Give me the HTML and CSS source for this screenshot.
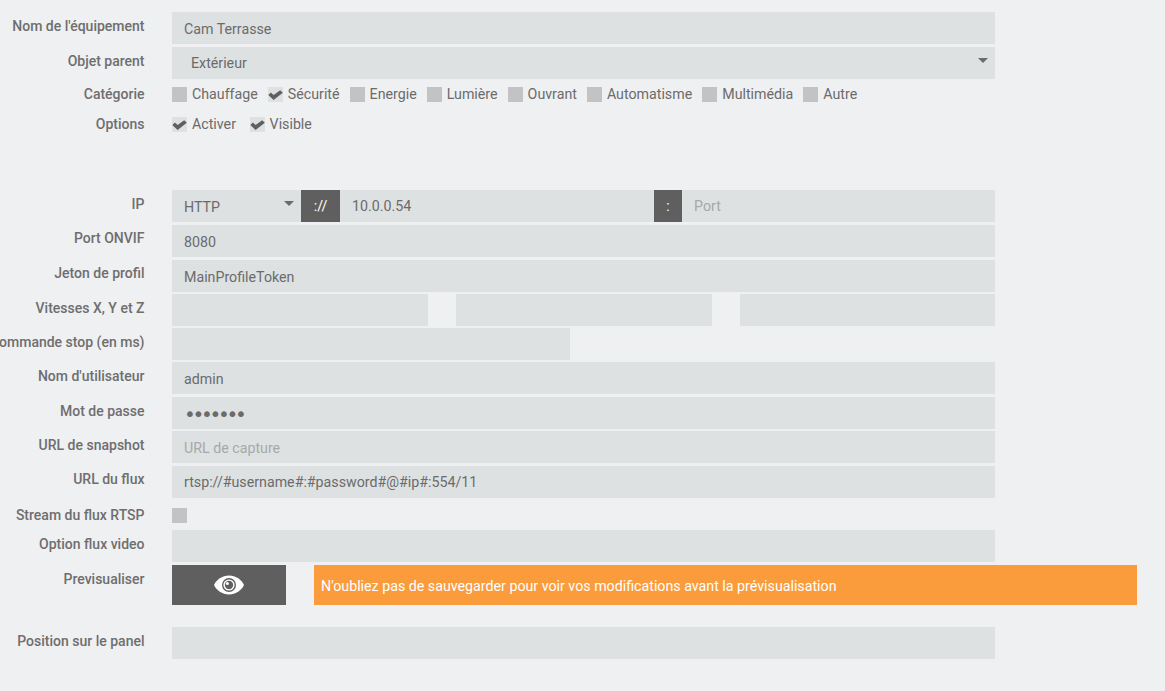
FILE: index.html
```html
<!DOCTYPE html>
<html lang="fr">
<head>
<meta charset="utf-8">
<title>Cam Terrasse</title>
<link rel="stylesheet" href="styles.css">
</head>
<body>
<form class="form">
  <div class="row gap3"><label class="label">Nom de l'équipement</label><div class="fields"><input class="input" value="Cam Terrasse"></div></div>
  <div class="row gap8"><label class="label">Objet parent</label><div class="fields"><div class="select-wrap"><select class="input select"><option>Extérieur</option></select><span class="caret"></span></div></div></div>
  <div class="row row-check gap15"><label class="label">Catégorie</label><div class="fields checks cat">
    <span class="check"><i class="box"></i>Chauffage</span>
    <span class="check"><i class="box on"><svg viewBox="0 0 15 15"><path d="M.3 8 2.900 5.400 5.600 8 12.200 3.200 14.800 5.700 5.600 13z"/></svg></i>Sécurité</span>
    <span class="check"><i class="box"></i>Energie</span>
    <span class="check"><i class="box"></i>Lumière</span>
    <span class="check"><i class="box"></i>Ouvrant</span>
    <span class="check"><i class="box"></i>Automatisme</span>
    <span class="check"><i class="box"></i>Multimédia</span>
    <span class="check"><i class="box"></i>Autre</span>
  </div></div>
  <div class="row row-check gap58"><label class="label">Options</label><div class="fields checks">
    <span class="check"><i class="box on"><svg viewBox="0 0 15 15"><path d="M.3 8 2.900 5.400 5.600 8 12.200 3.200 14.800 5.700 5.600 13z"/></svg></i>Activer</span>
    <span class="check"><i class="box on"><svg viewBox="0 0 15 15"><path d="M.3 8 2.900 5.400 5.600 8 12.200 3.200 14.800 5.700 5.600 13z"/></svg></i>Visible</span>
  </div></div>

  <div class="row gap3"><label class="label">IP</label><div class="fields group">
    <div class="select-wrap proto"><select class="input select-plain"><option>HTTP</option></select><span class="caret"></span></div>
    <span class="addon slashes">://</span>
    <input class="input ip input-high" value="10.0.0.54">
    <span class="addon colon">:</span>
    <input class="input port input-high" placeholder="Port">
  </div></div>
  <div class="row gap3"><label class="label label-up">Port ONVIF</label><div class="fields"><input class="input" value="8080"></div></div>
  <div class="row gap2"><label class="label label-up">Jeton de profil</label><div class="fields"><input class="input" value="MainProfileToken"></div></div>
  <div class="row gap2"><label class="label">Vitesses X, Y et Z</label><div class="fields speeds"><input class="input"><input class="input"><input class="input"></div></div>
  <div class="row gap2"><label class="label">Commande stop (en ms)</label><div class="fields"><input class="input half"></div></div>
  <div class="row gap3"><label class="label">Nom d'utilisateur</label><div class="fields"><input class="input" value="admin"></div></div>
  <div class="row gap2"><label class="label">Mot de passe</label><div class="fields"><input class="input secret" type="password" value="abcdefg"></div></div>
  <div class="row gap3"><label class="label">URL de snapshot</label><div class="fields"><input class="input" placeholder="URL de capture"></div></div>
  <div class="row gap10"><label class="label label-up">URL du flux</label><div class="fields"><input class="input input-high" value="rtsp://#username#:#password#@#ip#:554/11"></div></div>
  <div class="row row-stream gap7"><label class="label">Stream du flux RTSP</label><div class="fields"><i class="box"></i></div></div>
  <div class="row gap3"><label class="label">Option flux video</label><div class="fields"><input class="input"></div></div>
  <div class="row row-preview gap22"><label class="label">Previsualiser</label><div class="fields preview">
    <button type="button" class="eye-btn"><svg class="eye" viewBox="0 0 30 20">
      <path class="eye-white" d="M15 .5C22 .5 27.500 4.800 30 10 27.500 15.200 22 19.500 15 19.500S2.500 15.200 0 10C2.500 4.800 8 .5 15 .5z"/>
      <circle class="eye-dark" cx="15" cy="10" r="7"/>
      <circle class="eye-white" cx="15" cy="10" r="5.600"/>
      <circle class="eye-dark" cx="15" cy="10" r="4.200"/>
      <circle class="eye-white" cx="13.400" cy="8.400" r="1.500"/>
    </svg></button>
    <div class="notice">N'oubliez pas de sauvegarder pour voir vos modifications avant la prévisualisation</div>
  </div></div>
  <div class="row"><label class="label">Position sur le panel</label><div class="fields"><input class="input"></div></div>
</form>
</body>
</html>
```
FILE: styles.css
```css
* { box-sizing: border-box; }
html, body { margin: 0; padding: 0; height: 100%; overflow: hidden; }
body { background: #eff0f2; font-family: Roboto, "Liberation Sans", sans-serif; font-size: 14.220px; color: #6b6b6b; }
.form { padding-top: 12px; width: 1165px; }
.row { display: flex; height: 32px; }
.gap2 { margin-bottom: 2px; }
.gap3 { margin-bottom: 3px; }
.gap7 { margin-bottom: 7px; }
.gap8 { margin-bottom: 8px; }
.gap10 { margin-bottom: 10px; }
.gap15 { margin-bottom: 15px; }
.gap22 { margin-bottom: 22px; }
.gap58 { margin-bottom: 58px; }
.label { flex: 0 0 144.500px; min-width: 0; height: 28px; line-height: 28px; font-size: 14px; font-weight: 500; white-space: nowrap; display: flex; justify-content: flex-end; color: #6e6e6e; }
.label-up { line-height: 26px; }
.fields { margin-left: 27.500px; width: 823px; display: flex; flex: none; }
.input { display: block; width: 100%; height: 32px; border: 0; border-radius: 0; outline: 0; background: #dee1e2; padding: 2px 12px 0; margin: 0; font: 14.220px/30px Roboto, "Liberation Sans", sans-serif; color: #6b6b6b; }
.input::placeholder { color: #a8a8a8; opacity: 1; }
.input-high { padding-top: 0; }
.secret { font-family: "DejaVu Sans", sans-serif; font-size: 20px; letter-spacing: -3.300px; padding-top: 1px; }
.select-wrap { position: relative; width: 100%; }
.select, .select-plain { appearance: none; -webkit-appearance: none; }
.select { padding-left: 19px; padding-top: 0; }
.select-plain { padding-left: 12px; }
.caret { position: absolute; right: 7px; top: 11px; width: 0; height: 0; border-left: 5px solid transparent; border-right: 5px solid transparent; border-top: 5px solid #6b6b6b; }
.row-check { height: 15px; }
.row-check .label { height: 15px; line-height: 15px; }
.checks { gap: 13.600px; align-items: center; }
.checks.cat { gap: 10px; }
.check { display: flex; align-items: center; gap: 5px; height: 15px; line-height: 15px; white-space: nowrap; }
.box { display: block; flex: none; width: 15px; height: 15px; background: #c3c3c3; }
.box.on { background: #dee1e2; }
.box svg { display: block; width: 15px; height: 15px; fill: #5f5f5f; }
.group { align-items: stretch; }
.proto { flex: 0 0 129px; width: 129px; }
.addon { flex: none; display: flex; align-items: center; justify-content: center; height: 32px; background: #5f5f5f; color: #fff; }
.slashes { width: 39px; }
.colon { width: 28px; }
.ip { flex: 0 0 314px; width: 314px; }
.port { flex: 1; min-width: 0; }
.speeds { gap: 28px; }
.speeds .input { flex: 0 0 256px; width: 256px; }
.speeds .input:last-child { flex-basis: 255px; width: 255px; }
.half { width: 398px; }
.row-stream { height: 15px; }
.row-stream .label { height: 15px; line-height: 15px; }
.row-preview { height: 40px; }
.preview { width: 965px; gap: 28px; }
.eye-btn { flex: 0 0 114px; height: 40px; border: 0; padding: 0; margin: 0; background: #5f5f5f; display: flex; align-items: center; justify-content: center; }
.eye { width: 30px; height: 20px; }
.eye-white { fill: #fff; }
.eye-dark { fill: #5f5f5f; }
.notice { width: 823px; height: 40px; background: #fa9c3b; color: #fff; line-height: 42px; padding-left: 7px; white-space: nowrap; }
```
